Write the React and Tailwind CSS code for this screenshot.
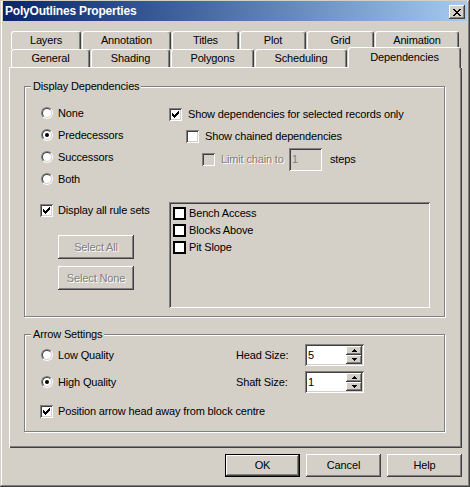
import React from 'react';

const raised = 'shadow-[inset_-1px_-1px_0_#404040,inset_1px_1px_0_#fff,inset_-2px_-2px_0_#808080,inset_2px_2px_0_#d4d0c8]';
const sunken = 'shadow-[inset_1px_1px_0_#808080,inset_-1px_-1px_0_#fff,inset_2px_2px_0_#404040,inset_-2px_-2px_0_#d4d0c8]';
const disabledText = 'text-[#808080] [text-shadow:1px_1px_0_#fff]';

const CHECK = [[3, 5], [4, 6], [5, 7], [6, 6], [7, 5], [8, 4], [9, 3]];

function Checkbox({ checked, disabled, label, gap = 'ml-[5px]' }) {
  return (
    <div className="flex items-center">
      <div className={`w-[13px] h-[13px] shrink-0 ${sunken} ${disabled ? 'bg-[#d4d0c8]' : 'bg-white'}`}>
        {checked && (
          <svg width="13" height="13" shapeRendering="crispEdges">
            {CHECK.map(([x, y]) => (
              <rect key={x} x={x} y={y} width="1" height="3" fill="#000" />
            ))}
          </svg>
        )}
      </div>
      {label && <span className={`${gap} ${disabled ? disabledText : ''}`}>{label}</span>}
    </div>
  );
}

function Radio({ checked, label }) {
  return (
    <div className="flex items-center">
      <div className="ml-[1px] w-[12px] h-[12px] rounded-full border border-t-[#808080] border-l-[#808080] border-b-white border-r-white flex items-center justify-center">
        <div className="w-[10px] h-[10px] rounded-full border border-t-[#404040] border-l-[#404040] border-b-[#d4d0c8] border-r-[#d4d0c8] bg-white flex items-center justify-center">
          {checked && <div className="w-[4px] h-[4px] rounded-full bg-black" />}
        </div>
      </div>
      <span className="ml-[5px]">{label}</span>
    </div>
  );
}

function Button({ children, disabled, isDefault, className = '' }) {
  return (
    <div
      className={`h-[23px] flex items-center justify-center ${raised} ${isDefault ? 'border border-black' : ''} ${disabled ? disabledText : ''} ${className}`}
    >
      {children}
    </div>
  );
}

function GroupBox({ title, className, children }) {
  return (
    <div className={`relative border border-[#808080] shadow-[inset_1px_1px_0_#fff,1px_1px_0_#fff] ${className}`}>
      <div className="absolute left-[6px] -top-[8px] h-[14px] leading-[14px] px-[2px] bg-[#d4d0c8]">{title}</div>
      {children}
    </div>
  );
}

function Arrow({ up }) {
  return (
    <svg width="5" height="3" shapeRendering="crispEdges">
      {up ? (
        <>
          <rect x="2" y="0" width="1" height="1" fill="#000" />
          <rect x="1" y="1" width="3" height="1" fill="#000" />
          <rect x="0" y="2" width="5" height="1" fill="#000" />
        </>
      ) : (
        <>
          <rect x="0" y="0" width="5" height="1" fill="#000" />
          <rect x="1" y="1" width="3" height="1" fill="#000" />
          <rect x="2" y="2" width="1" height="1" fill="#000" />
        </>
      )}
    </svg>
  );
}

function Spin({ value }) {
  return (
    <div className={`w-[59px] h-[22px] bg-white flex p-[2px] ${sunken}`}>
      <div className="flex-1 pl-[1px] leading-[18px]">{value}</div>
      <div className="w-[16px] flex flex-col bg-[#d4d0c8]">
        <div className={`h-[9px] flex items-center justify-center ${raised}`}><Arrow up /></div>
        <div className={`h-[9px] flex items-center justify-center ${raised}`}><Arrow /></div>
      </div>
    </div>
  );
}

const tabRow1 = [
  { label: 'Layers', cls: 'w-[70px]' },
  { label: 'Annotation', cls: 'w-[89px]' },
  { label: 'Titles', cls: 'w-[67px]' },
  { label: 'Plot', cls: 'w-[66px]' },
  { label: 'Grid', cls: 'w-[67px]' },
  { label: 'Animation', cls: 'w-[84px]' },
];

const tabRow2 = [
  { label: 'General', cls: 'w-[79px]' },
  { label: 'Shading', cls: 'w-[79px]' },
  { label: 'Polygons', cls: 'w-[83px]' },
  { label: 'Scheduling', cls: 'w-[92px]' },
];

const tabStyle = 'h-[18px] flex items-center justify-center rounded-t-[3px] border-t border-l border-white border-r border-r-[#404040] shadow-[inset_-1px_0_0_#808080]';

export default function App() {
  return (
    <div className={`w-[470px] h-[487px] bg-[#d4d0c8] flex flex-col pt-[1px] px-[3px] text-[11px] tracking-[-0.15px] text-black font-['Liberation_Sans',Arial,sans-serif] shadow-[inset_-1px_-1px_0_#404040,inset_1px_1px_0_#d4d0c8,inset_-2px_-2px_0_#808080,inset_2px_2px_0_#fff]`}>
      {/* title bar */}
      <div className="h-[20px] flex items-start bg-linear-to-r from-[#0a246a] to-[#a6caf0]">
        <div className="pl-[2px] pt-[3px] text-white font-bold text-[12px] tracking-[-0.2px] leading-[14px] flex-1">PolyOutlines Properties</div>
        <div className={`mt-[4px] mr-[2px] w-[16px] h-[14px] bg-[#d4d0c8] flex items-center justify-center ${raised}`}>
          <svg width="8" height="7" shapeRendering="crispEdges">
            <path d="M0 0h2v1H0zM1 1h2v1H1zM2 2h4v1H2zM3 3h2v1H3zM2 4h4v1H2zM1 5h2v1H1zM0 6h2v1H0zM6 0h2v1H6zM5 1h2v1H5zM5 5h2v1H5zM6 6h2v1H6z" fill="#000" />
          </svg>
        </div>
      </div>

      {/* tabs */}
      <div className="mt-[10px] ml-[8px] flex gap-px">
        {tabRow1.map((t) => (
          <div key={t.label} className={`${tabStyle} ${t.cls}`}>{t.label}</div>
        ))}
      </div>
      <div className="ml-[8px] h-[18px] flex items-start gap-px">
        {tabRow2.map((t) => (
          <div key={t.label} className={`${tabStyle} ${t.cls}`}>{t.label}</div>
        ))}
        <div className="relative z-10 -mt-[2px] w-[113px] h-[21px] pb-[2px] bg-[#d4d0c8] flex items-center justify-center rounded-t-[3px] border-t border-l border-white border-r border-r-[#404040] shadow-[inset_-1px_0_0_#808080]">
          Dependencies
        </div>
      </div>

      {/* panel */}
      <div className="ml-[6px] w-[453px] h-[381px] flex flex-col shadow-[inset_1px_1px_0_#fff,inset_-1px_-1px_0_#404040,inset_-2px_-2px_0_#808080]">
        <GroupBox title="Display Dependencies" className="ml-[15px] mt-[19px] w-[421px] h-[231px]">
          <div className="flex pl-[15px] pt-[15px]">
            <div className="w-[129px] flex flex-col">
              <div className="h-[22px] flex items-center"><Radio label="None" /></div>
              <div className="h-[22px] flex items-center"><Radio label="Predecessors" checked /></div>
              <div className="h-[22px] flex items-center"><Radio label="Successors" /></div>
              <div className="h-[22px] flex items-center"><Radio label="Both" /></div>
              <div className="mt-[9px] h-[22px] flex items-center"><Checkbox checked label="Display all rule sets" /></div>
              <Button disabled className="mt-[14px] ml-[18px] w-[76px] h-[24px]">Select All</Button>
              <Button disabled className="mt-[7px] ml-[18px] w-[76px] h-[24px]">Select None</Button>
            </div>
            <div className="mt-[1px] flex flex-col">
              <div className="h-[22px] flex items-center"><Checkbox checked gap="ml-[6px]" label="Show dependencies for selected records only" /></div>
              <div className="h-[22px] ml-[17px] flex items-center"><Checkbox gap="ml-[6px]" label="Show chained dependencies" /></div>
              <div className="h-[25px] ml-[33px] flex items-center">
                <Checkbox disabled gap="ml-[6px]" />
                <span className={`ml-[6px] w-[68px] ${disabledText}`}>Limit chain to</span>
                <div className={`w-[33px] h-[23px] pl-[3px] leading-[23px] bg-[#d4d0c8] text-[#808080] ${sunken}`}>1</div>
                <span className="ml-[8px]">steps</span>
              </div>
              <div className={`mt-[30px] w-[261px] h-[106px] pt-[3px] pl-[4px] bg-[#d4d0c8] flex flex-col ${sunken}`}>
                {['Bench Access', 'Blocks Above', 'Pit Slope'].map((item) => (
                  <div key={item} className="h-[17px] flex items-center">
                    <div className="w-[13px] h-[13px] border-2 border-black bg-white" />
                    <span className="ml-[3px]">{item}</span>
                  </div>
                ))}
              </div>
            </div>
          </div>
        </GroupBox>

        <GroupBox title="Arrow Settings" className="ml-[15px] mt-[17px] w-[421px] h-[98px]">
          <div className="flex flex-col pl-[15px] pt-[9px]">
            <div className="h-[22px] flex items-center">
              <div className="w-[196px]"><Radio label="Low Quality" /></div>
              <div className="w-[69px]">Head Size:</div>
              <Spin value="5" />
            </div>
            <div className="mt-[5px] h-[22px] flex items-center">
              <div className="w-[196px]"><Radio label="High Quality" checked /></div>
              <div className="w-[69px]">Shaft Size:</div>
              <Spin value="1" />
            </div>
            <div className="mt-[7px] h-[22px] flex items-center">
              <Checkbox checked label="Position arrow head away from block centre" />
            </div>
          </div>
        </GroupBox>
      </div>

      {/* dialog buttons */}
      <div className="mt-[6px] mr-[5px] flex justify-end gap-[6px]">
        <Button isDefault className="w-[75px]">OK</Button>
        <Button className="w-[75px]">Cancel</Button>
        <Button className="w-[75px]">Help</Button>
      </div>
    </div>
  );
}
